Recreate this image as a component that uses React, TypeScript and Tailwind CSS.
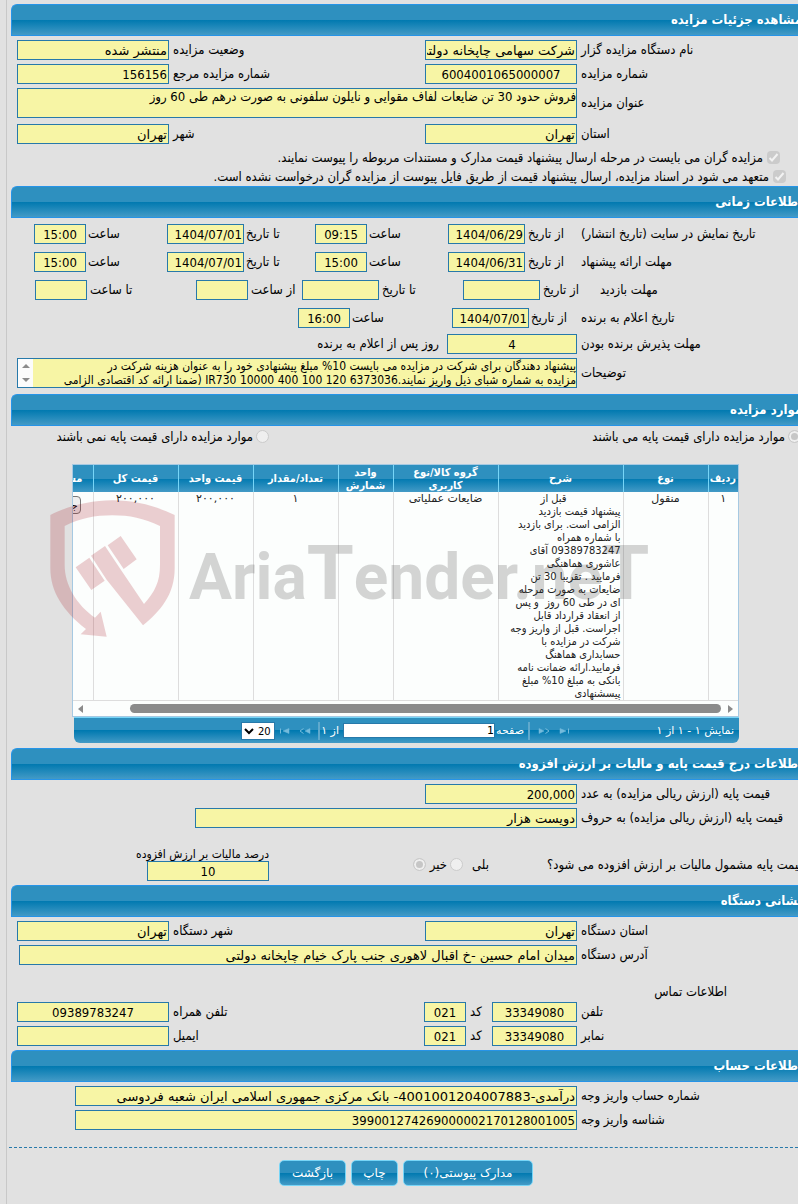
import React, { useId } from "react";

const GLOSS =
  "bg-[linear-gradient(to_bottom,#2e90bf_0%,#2e90bf_50%,#0079b0_50%,#439ac6_100%)]";

const WIDE = "font-['DejaVu_Sans',sans-serif]";

const INPUT =
  "h-5 shrink-0 border border-[#2779aa] bg-[#f7f5a5] px-px text-[13px] leading-4 text-black outline-none";

interface FieldProps {
  label: string;
  value?: string;
  labelClass?: string;
  className?: string;
}

// Label followed by its read only text box
function Field({
  label,
  value = "",
  labelClass = "w-[221px] pl-1",
  className = "w-[152px]",
}: FieldProps) {
  const id = useId();
  const isNumeric = /^[\d/:,]*$/.test(value);
  return (
    <>
      <label htmlFor={id} className={`text-left whitespace-nowrap ${labelClass}`}>
        {label}
      </label>
      <input
        id={id}
        type="text"
        readOnly
        defaultValue={value}
        className={`${INPUT} ${isNumeric ? "" : WIDE} ${className}`}
      />
    </>
  );
}

function Row({ children }: { children: React.ReactNode }) {
  return <div className="flex h-5 items-center leading-5 *:shrink-0">{children}</div>;
}

// Row that holds a two line text area
function TallRow({ children }: { children: React.ReactNode }) {
  return <div className="flex h-[30px] items-center">{children}</div>;
}

// Blue bar with the section title
function SectionTitle({ children }: { children: React.ReactNode }) {
  return (
    <h2
      className={`flex h-8 items-center rounded-tl-md border border-r-0 border-[#2694e8] text-[13px] font-bold whitespace-nowrap text-white ${GLOSS}`}
    >
      <span className="-mr-1">{children}</span>
    </h2>
  );
}

interface RadioProps {
  name: string;
  label: string;
  checked?: boolean;
  className?: string;
}

function Radio({ name, label, checked = false, className = "" }: RadioProps) {
  return (
    <label className={`flex items-center gap-[3px] whitespace-nowrap ${className}`}>
      <input
        type="radio"
        name={name}
        disabled
        defaultChecked={checked}
        className="h-[13px] w-[13px] appearance-none rounded-full border border-[#cbcbcb] bg-[#efefef] checked:bg-[#c6c6c6] checked:shadow-[inset_0_0_0_2px_#efefef]"
      />
      {label}
    </label>
  );
}

function Check({ label, className }: { label: string; className: string }) {
  return (
    <label className={`flex h-[19px] items-center gap-1 whitespace-nowrap ${className}`}>
      <span className="relative flex">
        <input
          type="checkbox"
          disabled
          defaultChecked
          className="h-[13px] w-[13px] appearance-none rounded-sm bg-[#cbcbcb]"
        />
        <svg viewBox="0 0 13 13" className="absolute inset-0 h-[13px] w-[13px]">
          <path d="M2.5 7 5 9.5 10.5 3" fill="none" stroke="#f2f2f2" strokeWidth="2" />
        </svg>
      </span>
      {label}
    </label>
  );
}

function Details() {
  return (
    <section>
      <SectionTitle>مشاهده جزئیات مزایده</SectionTitle>
      <div className="flex flex-col gap-1 pt-1 pl-1.5">
        <Row>
          <Field label="نام دستگاه مزایده گزار" value="شرکت سهامی چاپخانه دولتی ایران" />
          <Field label="وضعیت مزایده" value="منتشر شده" labelClass="flex-1 pl-1" />
        </Row>
        <Row>
          <Field label="شماره مزایده" value="6004001065000007" className="w-[152px] text-center" />
          <Field label="شماره مزایده مرجع" value="156156" labelClass="flex-1 pl-1" />
        </Row>
        <TallRow>
          <label htmlFor="title" className="w-[221px] pl-1 text-left">
            عنوان مزایده
          </label>
          <textarea
            id="title"
            readOnly
            defaultValue="فروش حدود 30 تن ضایعات لفاف مقوایی و نایلون سلفونی به صورت درهم طی 60 روز"
            className="block h-full flex-1 resize-none overflow-hidden border border-[#2779aa] bg-[#f7f5a5] text-[13px] leading-4 text-black outline-none"
          />
        </TallRow>
        <div className="pt-0.5">
          <Row>
            <Field label="استان" value="تهران" />
            <Field label="شهر" value="تهران" labelClass="flex-1 pl-1" />
          </Row>
        </div>
      </div>
      <div className="flex flex-col pt-1">
        <Check
          className="pr-[18px]"
          label="مزایده گران می بایست در مرحله ارسال پیشنهاد قیمت مدارک و مستندات مربوطه را پیوست نمایند."
        />
        <Check
          className="pr-3"
          label="متعهد می شود در اسناد مزایده، ارسال پیشنهاد قیمت از طریق فایل پیوست از مزایده گران درخواست نشده است."
        />
      </div>
    </section>
  );
}

interface PeriodProps {
  label: string;
  from: string;
  fromTime: string;
  to: string;
  toTime: string;
}

function Period({ label, from, fromTime, to, toTime }: PeriodProps) {
  return (
    <Row>
      <span className="w-[221px] pl-1 text-left">{label}</span>
      <Field label="از تاریخ" value={from} labelClass="w-[52px] pl-[3px]" className="w-[77px]" />
      <Field label="ساعت" value={fromTime} labelClass="w-[81px] pl-0.5" className="w-[52px] text-center" />
      <Field label="تا تاریخ" value={to} labelClass="w-[71px] pl-0.5" className="w-[77px]" />
      <Field label="ساعت" value={toTime} labelClass="w-[81px] pl-0.5" className="w-[52px] text-center" />
    </Row>
  );
}

function Schedule() {
  return (
    <section>
      <SectionTitle>اطلاعات زمانی</SectionTitle>
      <div className="flex flex-col gap-2 pt-1.5 pl-1.5">
        <Period
          label="تاریخ نمایش در سایت (تاریخ انتشار)"
          from="1404/06/29"
          fromTime="09:15"
          to="1404/07/01"
          toTime="15:00"
        />
        <Period
          label="مهلت ارائه پیشنهاد"
          from="1404/06/31"
          fromTime="15:00"
          to="1404/07/01"
          toTime="15:00"
        />
        <Row>
          <span className="w-[198px] text-left">مهلت بازدید</span>
          <Field label="از تاریخ" labelClass="w-[60px] pl-[3px]" className="w-[77px]" />
          <Field label="تا تاریخ" labelClass="w-[84px] pl-[3px]" className="w-[77px]" />
          <Field label="از ساعت" labelClass="w-[54px] pl-[3px]" className="w-[52px]" />
          <Field label="تا ساعت" labelClass="w-[109px] pl-[3px]" className="w-[52px]" />
        </Row>
        <Row>
          <span className="w-[221px] pl-1 text-left">تاریخ اعلام به برنده</span>
          <Field label="از تاریخ" value="1404/07/01" labelClass="w-[48px] pl-0.5" className="w-[77px]" />
          <Field label="ساعت" value="16:00" labelClass="w-[102px] pl-0.5" className="w-[52px] text-center" />
        </Row>
      </div>
      <div className="flex flex-col gap-1 py-1.5 pl-1.5">
        <Row>
          <Field label="مهلت پذیرش برنده بودن" value="4" className="w-[130px] text-center" />
          <span className="pr-2">روز پس از اعلام به برنده</span>
        </Row>
        <TallRow>
          <label htmlFor="notes" className="w-[221px] pl-1 text-left">
            توضیحات
          </label>
          <div className="flex h-full flex-1 border border-[#2779aa] bg-[#f7f5a5]">
            <textarea
              id="notes"
              readOnly
              wrap="off"
              defaultValue={
                "پیشنهاد دهندگان برای شرکت در مزایده می بایست 10% مبلغ پیشنهادی خود را به عنوان هزینه شرکت در\nمزایده به شماره شبای ذیل واریز نمایند.IR730 10000 400 100 120 6373036 (ضمنا ارائه کد اقتصادی الزامی"
              }
              className="block min-w-0 flex-1 resize-none overflow-hidden text-[12px] leading-[14px] text-black outline-none"
            />
            <div className="flex w-[15px] flex-col items-center justify-around bg-[#fcfcfc]">
              <span className="border-x-4 border-b-4 border-x-transparent border-b-[#8b8b8b]" />
              <span className="border-x-4 border-t-4 border-x-transparent border-t-[#8b8b8b]" />
            </div>
          </div>
        </TallRow>
      </div>
    </section>
  );
}

const COLUMNS = [
  { title: "ردیف", width: "w-[30px]" },
  { title: "نوع", width: "w-[85px]" },
  { title: "شرح", width: "w-[125px]" },
  { title: "گروه کالا/نوع کاربری", width: "w-[105px]" },
  { title: "واحد شمارش", width: "w-[55px]" },
  { title: "تعداد/مقدار", width: "w-[85px]" },
  { title: "قیمت واحد", width: "w-[75px]" },
  { title: "قیمت کل", width: "w-[85px]" },
];

const DESCRIPTION = [
  "پیشنهاد قیمت بازدید",
  "الزامی است. برای بازدید",
  "با شماره همراه",
  "09389783247 آقای",
  "عاشوری هماهنگی",
  "فرمایید . تقریبا 30 تن",
  "ضایعات به صورت مرحله",
  "ای در طی 60 روز  و پس",
  "از انعقاد قرارداد قابل",
  "اجراست. قبل از واریز وجه",
  "شرکت در مزایده با",
  "حسابداری هماهنگ",
  "فرمایید.ارائه ضمانت نامه",
  "بانکی به مبلغ 10% مبلغ",
  "پیسشنهادی",
];

const TH = "border-l border-[#77d5f7] px-0.5 text-center align-middle font-bold";
const TD = "border-l border-[#dddddd] px-0.5 align-top";
const TD_CENTER = `${TD} ${WIDE} text-center`;

function Watermark() {
  return (
    <div
      dir="ltr"
      className="pointer-events-none absolute top-9 -left-[22px] flex items-start gap-[14px] opacity-20"
    >
      <svg viewBox="150 135 375 411" className="h-[137px] w-[125px] shrink-0" fill="#a81420">
        <path d="M151 180C200 155 270 136 337 136C410 136 470 155 524 180V340C524 420 480 470 429 511L320 374L273 302L315 273L363 345L432 447C465 410 480 380 480 330V213C430 190 390 181 337 181C285 181 240 190 194 213V330C194 390 230 450 285 488L302 470L320 545L242 538L258 522C190 470 151 410 151 340Z" />
        <path d="M227 337 268 308 314 377 274 405ZM323 271 362 243 410 313 371 342Z" />
      </svg>
      <span className="pt-7 font-['Roboto',sans-serif] text-[64px] leading-[90px] font-bold whitespace-nowrap text-[#333333]">
        Aria<span className="text-[76px]">T</span>ender.ne<span className="text-[76px]">T</span>
      </span>
    </div>
  );
}

interface PagerIconProps {
  label: string;
  triangle: string;
  line: string;
}

function PagerIcon({ label, triangle, line }: PagerIconProps) {
  return (
    <button type="button" disabled aria-label={label} className="flex">
      <svg viewBox="0 0 12 8" className="h-2 w-3">
        <path d={triangle} fill="#74bbdc" stroke="#74bbdc" strokeWidth="0.5" />
        <path d={line} fill="none" stroke="#74bbdc" />
      </svg>
    </button>
  );
}

function Pager() {
  return (
    <div
      className={`ml-0.5 flex h-[26px] items-center rounded-b-md border-t border-[#77d5f7] pr-[5px] text-[11px] whitespace-nowrap text-white ${WIDE} ${GLOSS}`}
    >
      <span className="w-[164px]">نمایش ۱ - ۱ از ۱</span>
      <div className="flex items-center">
        <PagerIcon label="اولین صفحه" triangle="M2 1.5 8 4 2 6.5Z" line="M10.5 1.5V6.5" />
        <span className="w-2" />
        <PagerIcon label="صفحه قبل" triangle="M1 1.5 6 4 1 6.5Z" line="M7.5 1.5 11 4 7.5 6.5" />
        <span className="mr-2 ml-1 h-[18px] w-0.5 bg-[#5fa9cd]" />
        <label htmlFor="page" className="w-[29px]">
          صفحه
        </label>
        <input
          id="page"
          type="text"
          readOnly
          defaultValue="1"
          className="h-[15px] w-[152px] border border-[#2779aa] bg-white text-[11px] leading-3 text-black outline-none"
        />
        <span className="w-[23px] pr-1">از ۱</span>
        <span className="ml-[7px] h-[18px] w-0.5 bg-[#5fa9cd]" />
        <PagerIcon label="صفحه بعد" triangle="M11 1.5 6 4 11 6.5Z" line="M4.5 1.5 1 4 4.5 6.5" />
        <span className="w-2" />
        <PagerIcon label="آخرین صفحه" triangle="M10 1.5 4 4 10 6.5Z" line="M1.5 1.5V6.5" />
        <div className="relative mr-1 flex">
          <select
            aria-label="تعداد در صفحه"
            dir="ltr"
            className="h-[18px] w-[34px] appearance-none border border-[#2779aa] bg-white pl-4 text-[10px] text-black"
          >
            <option>20</option>
          </select>
          <svg viewBox="0 0 10 7" className="pointer-events-none absolute top-1.5 left-[3px] h-[7px] w-2.5">
            <path d="M1 1 5 5 9 1" fill="none" stroke="#000" strokeWidth="2" />
          </svg>
        </div>
      </div>
    </div>
  );
}

function Items() {
  return (
    <section>
      <SectionTitle>موارد مزایده</SectionTitle>
      <div className="flex h-[38px] pt-1">
        <Radio
          name="hasBase"
          checked
          label="موارد مزایده دارای قیمت پایه می باشند"
          className="-mr-[3px] h-[13px] w-[532px]"
        />
        <Radio
          name="hasBase"
          label="موارد مزایده دارای قیمت پایه نمی باشند"
          className="h-[13px]"
        />
      </div>
      <div className="relative mr-[59px] ml-[61px]">
        <div className="overflow-hidden border border-[#a6c9e2] bg-[#fcfefd]">
          <table className="w-[720px] table-fixed border-collapse text-[11px] leading-[13px] text-[#222222]">
            <thead>
              <tr className={`h-[27px] text-white ${GLOSS}`}>
                {COLUMNS.map((c) => (
                  <th key={c.title} className={`${TH} ${c.width}`}>
                    {c.title}
                  </th>
                ))}
                <th className="pr-2.5 text-right font-bold">مستندات</th>
              </tr>
            </thead>
            <tbody>
              <tr className="h-[208px] border-b border-[#dddddd]">
                <td className={TD_CENTER}>۱</td>
                <td className={TD_CENTER}>منقول</td>
                <td className={`${TD} text-right whitespace-pre`}>
                  <p className="indent-[54px]">قبل از</p>
                  {DESCRIPTION.map((line) => (
                    <p key={line}>{line}</p>
                  ))}
                </td>
                <td className={TD_CENTER}>ضایعات عملیاتی</td>
                <td className={TD_CENTER}></td>
                <td className={TD_CENTER}>۱</td>
                <td className={TD_CENTER}>۲۰۰,۰۰۰</td>
                <td className={TD_CENTER}>۲۰۰,۰۰۰</td>
                <td className="pt-1 pr-3 text-right align-top">
                  <button
                    type="button"
                    className="h-[18px] rounded-sm border border-[#767676] bg-[#efefef] px-0.5 text-[11px] text-black"
                  >
                    جزئیات
                  </button>
                </td>
              </tr>
            </tbody>
          </table>
          <div className="flex h-[15px] items-center gap-[7px] px-[5px]">
            <span className="border-y-4 border-l-[5px] border-y-transparent border-l-[#8b8b8b]" />
            <span className="ml-10 h-[9px] flex-1 rounded-full bg-[#8b8b8b]" />
            <span className="border-y-4 border-r-[5px] border-y-transparent border-r-[#8b8b8b]" />
          </div>
        </div>
        <Pager />
        <Watermark />
      </div>
    </section>
  );
}

function BasePrice() {
  return (
    <section>
      <SectionTitle>اطلاعات درج قیمت پایه و مالیات بر ارزش افزوده</SectionTitle>
      <div className="flex flex-col gap-1 pt-1 pl-1.5">
        <Row>
          <Field label="قیمت پایه (ارزش ریالی مزایده) به عدد" value="200,000" />
        </Row>
        <Row>
          <Field
            label="قیمت پایه (ارزش ریالی مزایده) به حروف"
            value="دویست هزار"
            className="w-[382px]"
          />
        </Row>
      </div>
      <div className="flex pt-5 pb-1">
        <div className="flex h-[33px] items-center">
          <span className="-mr-2 w-[259px] text-left whitespace-nowrap">
            قیمت پایه مشمول مالیات بر ارزش افزوده می شود؟
          </span>
          <label className="mr-[58px] flex w-[39px] items-center justify-between">
            بلی
            <input
              type="radio"
              name="vat"
              disabled
              className="h-[13px] w-[13px] appearance-none rounded-full border border-[#cbcbcb] bg-[#efefef]"
            />
          </label>
          <label className="mr-[3px] flex w-[34px] items-center justify-between">
            خیر
            <input
              type="radio"
              name="vat"
              disabled
              defaultChecked
              className="h-[13px] w-[13px] appearance-none rounded-full border border-[#cbcbcb] bg-[#c6c6c6] shadow-[inset_0_0_0_2px_#efefef]"
            />
          </label>
        </div>
        <div className="mr-36 flex w-[122px] flex-col">
          <label htmlFor="vatRate" className="h-[13px] text-[12px] leading-[13px] whitespace-nowrap">
            درصد مالیات بر ارزش افزوده
          </label>
          <input
            id="vatRate"
            type="text"
            readOnly
            defaultValue="10"
            className={`${INPUT} w-full text-center`}
          />
        </div>
      </div>
    </section>
  );
}

function Phone({ label }: { label: string }) {
  return (
    <>
      <Field label={label} value="33349080" className="w-[85px] text-center" />
      <Field label="کد" value="021" labelClass="w-[26px] pl-1" className="w-[42px] text-center" />
    </>
  );
}

function Address() {
  return (
    <section>
      <SectionTitle>نشانی دستگاه</SectionTitle>
      <div className="flex flex-col gap-1 py-1 pl-1.5">
        <Row>
          <Field label="استان دستگاه" value="تهران" />
          <Field label="شهر دستگاه" value="تهران" labelClass="flex-1 pl-1" />
        </Row>
        <Row>
          <Field
            label="آدرس دستگاه"
            value="میدان امام حسین -خ اقبال لاهوری جنب پارک خیام چاپخانه دولتی"
            className="ml-0.5 flex-1"
          />
        </Row>
        <h3 className="flex h-[29px] items-end pr-[71px] leading-3">اطلاعات تماس</h3>
        <Row>
          <Phone label="تلفن" />
          <Field
            label="تلفن همراه"
            value="09389783247"
            labelClass="flex-1 pl-1"
            className="w-[152px] text-center"
          />
        </Row>
        <Row>
          <Phone label="نمابر" />
          <Field label="ایمیل" labelClass="flex-1 pl-1" />
        </Row>
      </div>
    </section>
  );
}

function Account() {
  return (
    <section>
      <SectionTitle>اطلاعات حساب</SectionTitle>
      <div className="flex flex-col gap-1 pt-1 pb-[17px] pl-1.5">
        <Row>
          <Field
            label="شماره حساب واریز وجه"
            value="درآمدی-4001001204007883- بانک مرکزی جمهوری اسلامی ایران شعبه فردوسی"
            className="w-[502px]"
          />
        </Row>
        <Row>
          <Field
            label="شناسه واریز وجه"
            value="399001274269000002170128001005"
            className="w-[502px]"
          />
        </Row>
      </div>
    </section>
  );
}

const BUTTON = `h-[26px] rounded-[5px] border border-[#77d5f7] text-[12px] text-white ${WIDE} ${GLOSS}`;

export default function App() {
  return (
    <div
      dir="rtl"
      className="min-h-screen overflow-hidden bg-[#e1e1e1] pl-1.5 font-['DejaVu_Sans_Condensed','DejaVu_Sans',sans-serif] text-[13px] leading-[18px] text-black"
    >
      <main className="min-h-screen border-l border-[#c8c8c8] pt-1">
        <div className="pl-1">
          <Details />
          <Schedule />
          <Items />
          <div className="h-[5px]" />
          <BasePrice />
          <Address />
          <Account />
        </div>
        <div className="-mr-[5px] ml-0.5 flex justify-center gap-[5px] border-t border-dashed border-[#2779aa] pt-3 pb-[18px]">
          <button type="button" className={`${BUTTON} w-[130px]`}>
            مدارک پیوستی(۰)
          </button>
          <button type="button" className={`${BUTTON} w-[47px]`}>
            چاپ
          </button>
          <button type="button" className={`${BUTTON} w-[67px]`}>
            بازگشت
          </button>
        </div>
      </main>
    </div>
  );
}
